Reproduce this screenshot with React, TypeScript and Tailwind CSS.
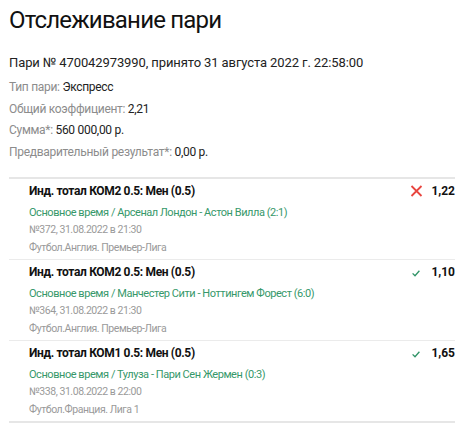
import React from 'react';

type Bet = {
  id: string;
  market: string;
  event: string;
  meta: string;
  league: string;
  odds: string;
  won: boolean;
};

const bets: Bet[] = [
  {
    id: '372',
    market: 'Инд. тотал КОМ2 0.5: Мен (0.5)',
    event: 'Основное время / Арсенал Лондон - Астон Вилла (2:1)',
    meta: '№372, 31.08.2022 в 21:30',
    league: 'Футбол.Англия. Премьер-Лига',
    odds: '1,22',
    won: false,
  },
  {
    id: '364',
    market: 'Инд. тотал КОМ2 0.5: Мен (0.5)',
    event: 'Основное время / Манчестер Сити - Ноттингем Форест (6:0)',
    meta: '№364, 31.08.2022 в 21:30',
    league: 'Футбол.Англия. Премьер-Лига',
    odds: '1,10',
    won: true,
  },
  {
    id: '338',
    market: 'Инд. тотал КОМ1 0.5: Мен (0.5)',
    event: 'Основное время / Тулуза - Пари Сен Жермен (0:3)',
    meta: '№338, 31.08.2022 в 22:00',
    league: 'Футбол.Франция. Лига 1',
    odds: '1,65',
    won: true,
  },
];

const LostIcon = () => (
  <svg width="13" height="12" viewBox="0 0 13 12" className="shrink-0">
    <path d="M1.5 1 L11.5 11 M11.5 1 L1.5 11" stroke="#e8453f" strokeWidth="1.8" />
  </svg>
);

const WonIcon = () => (
  <svg width="8" height="7" viewBox="0 0 8 7" className="shrink-0 mt-[4px]">
    <path d="M0.6 3.4 L3 5.8 L7.4 0.8" stroke="#2f9366" strokeWidth="1.3" fill="none" />
  </svg>
);

const InfoRow = ({ label, value }: { label: string; value: string }) => (
  <div className="text-[12px] leading-[21.7px] tracking-[-0.3px]">
    <span className="text-[#8c8c8c]">{label}</span>{' '}
    <span className="text-[#222]">{value}</span>
  </div>
);

export default function App() {
  return (
    <div className="w-[459px] h-[428px] bg-white overflow-hidden pl-[9px] pr-[4px]" style={{ fontFamily: 'Roboto, sans-serif' }}>
      <h1 className="text-[24px] leading-[30px] tracking-[-0.8px] text-[#111] pt-[5px]">Отслеживание пари</h1>

      <div className="mt-[18px] text-[13px] leading-[20px] tracking-[-0.1px] text-[#222]">
        Пари № 470042973990, принято 31 августа 2022 г. 22:58:00
      </div>
      <div className="mt-[4px]">
        <InfoRow label="Тип пари:" value="Экспресс" />
        <InfoRow label="Общий коэффициент:" value="2,21" />
        <InfoRow label="Сумма*:" value="560 000,00 р." />
        <InfoRow label="Предварительный результат*:" value="0,00 р." />
      </div>

      <div className="mt-[13px] border-t-2 border-[#e6e6e6]">
        {bets.map((bet, i) => (
          <div
            key={bet.id}
            className={`pl-[20px] pt-[2px] pb-[2.5px] ${i < bets.length - 1 ? 'border-b border-[#ebebeb]' : 'border-b-2 border-[#e6e6e6]'}`}
          >
            <div className="flex items-center h-[20px]">
              <div className="flex-1 text-[12px] font-bold tracking-[-0.35px] text-[#111]">{bet.market}</div>
              <div className="w-[20px] flex justify-center">{bet.won ? <WonIcon /> : <LostIcon />}</div>
              <div className="w-[29px] text-right text-[12px] font-bold text-[#111]">{bet.odds}</div>
            </div>
            <div className="mt-[3px] text-[11px] leading-[17.5px] tracking-[-0.45px] text-[#36986a]">{bet.event}</div>
            <div className="text-[10.5px] leading-[17.5px] tracking-[-0.45px] text-[#9a9a9a]">{bet.meta}</div>
            <div className="text-[10.5px] leading-[17.5px] tracking-[-0.45px] text-[#9a9a9a]">{bet.league}</div>
          </div>
        ))}
      </div>
    </div>
  );
}
